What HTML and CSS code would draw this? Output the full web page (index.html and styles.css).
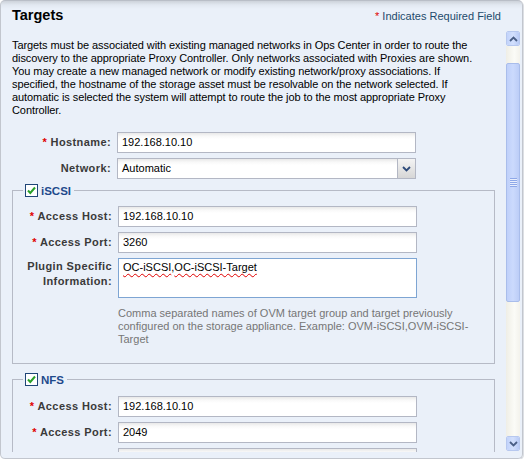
FILE: index.html
```html
<!DOCTYPE html>
<html>
<head>
<meta charset="utf-8">
<title>Targets</title>
<link rel="stylesheet" href="styles.css">
</head>
<body>
<div class="panel">
  <div class="header">
    <h1 class="title">Targets</h1>
    <span class="req-note"><span class="star">*</span> Indicates Required Field</span>
  </div>
  <div class="body">
    <div class="content">
      <p class="intro">Targets must be associated with existing managed networks in Ops Center in order to route the<br>discovery to the appropriate Proxy Controller. Only networks associated with Proxies are shown.<br>You may create a new managed network or modify existing network/proxy associations. If<br>specified, the hostname of the storage asset must be resolvable on the network selected. If<br>automatic is selected the system will attempt to route the job to the most appropriate Proxy<br>Controller.</p>

      <div class="form-grid top-grid">
        <label class="lbl"><span class="star">*</span> Hostname:</label>
        <div class="input">192.168.10.10</div>
        <label class="lbl">Network:</label>
        <div class="input select"><span class="select-text">Automatic</span><span class="select-btn"><svg width="9" height="6" viewBox="0 0 9 6"><path d="M1 1 L4.5 4.5 L8 1" fill="none" stroke="#2d4a7a" stroke-width="1.8"/></svg></span></div>
      </div>

      <fieldset class="group">
        <legend class="legend"><span class="check"><svg width="13" height="13" viewBox="0 0 13 13"><rect x="0.5" y="0.5" width="12" height="12" fill="#fff" stroke="#1f4577"/><path d="M3 6.5 L5.3 9 L10 3.5" fill="none" stroke="#2aa02a" stroke-width="2"/></svg></span><span class="legend-text">iSCSI</span></legend>
        <div class="form-grid">
          <label class="lbl"><span class="star">*</span> Access Host:</label>
          <div class="input">192.168.10.10</div>
          <label class="lbl"><span class="star">*</span> Access Port:</label>
          <div class="input">3260</div>
          <label class="lbl lbl-top">Plugin Specific<br>Information:</label>
          <div class="input textarea"><span class="misspelled">OC-iSCSI</span>,<span class="misspelled">OC-iSCSI-Target</span></div>
          <p class="help">Comma separated names of OVM target group and target previously<br>configured on the storage appliance. Example: OVM-iSCSI,OVM-iSCSI-<br>Target</p>
        </div>
      </fieldset>

      <fieldset class="group">
        <legend class="legend"><span class="check"><svg width="13" height="13" viewBox="0 0 13 13"><rect x="0.5" y="0.5" width="12" height="12" fill="#fff" stroke="#1f4577"/><path d="M3 6.5 L5.3 9 L10 3.5" fill="none" stroke="#2aa02a" stroke-width="2"/></svg></span><span class="legend-text">NFS</span></legend>
        <div class="form-grid nfs-grid">
          <label class="lbl"><span class="star">*</span> Access Host:</label>
          <div class="input">192.168.10.10</div>
          <label class="lbl"><span class="star">*</span> Access Port:</label>
          <div class="input">2049</div>
          <span class="lbl"></span>
          <div class="input"></div>
        </div>
      </fieldset>
    </div>

    <div class="scrollbar">
      <div class="sb-btn"><svg width="9" height="6" viewBox="0 0 9 6"><path d="M1 5 L4.5 1.5 L8 5" fill="none" stroke="#4a5f86" stroke-width="1.8"/></svg></div>
      <div class="sb-track">
        <div class="sb-thumb"><span class="grip"></span></div>
      </div>
      <div class="sb-btn"><svg width="9" height="6" viewBox="0 0 9 6"><path d="M1 1 L4.5 4.5 L8 1" fill="none" stroke="#4a5f86" stroke-width="1.8"/></svg></div>
    </div>
  </div>
</div>
</body>
</html>
```

FILE: styles.css
```css
html, body {
  margin: 0;
  padding: 0;
  background: #ffffff;
}

body {
  font-family: "Liberation Sans", Arial, sans-serif;
  font-size: 11px;
  color: #000;
}

.panel {
  width: 521px;
  height: 457px;
  border: 1px solid #c2c6ce;
  border-top-color: #b9bec7;
  border-radius: 5px;
  background: linear-gradient(#cdd2da 0, #e2e8f1 4px, #eaf0f9 8px);
  display: flex;
  flex-direction: column;
  overflow: hidden;
  box-shadow: 1px 1px 0 #dcdfe4;
}

.header {
  height: 30px;
  box-sizing: border-box;
  display: flex;
  justify-content: space-between;
  align-items: baseline;
  padding: 6px 21px 0 11px;
}

.title {
  margin: 0;
  font-size: 14.5px;
  font-weight: bold;
  color: #000;
}

.req-note {
  color: #1e4a6b;
  font-size: 11px;
}

.star {
  color: #e00000;
}

.body {
  flex: 1;
  display: flex;
  min-height: 0;
}

.content {
  flex: 1;
  padding: 8px 0 0 11px;
  margin-bottom: 6px;
  overflow: hidden;
}

.intro {
  margin: 0;
  line-height: 13px;
  letter-spacing: -0.08px;
  color: #000;
}

.form-grid {
  display: grid;
  grid-template-columns: 89px 299px;
  column-gap: 6px;
  row-gap: 5px;
  align-items: center;
}

.top-grid {
  grid-template-columns: 99px 299px;
  margin-top: 15px;
}

.nfs-grid {
  margin-top: 1px;
}

.lbl {
  text-align: right;
  font-weight: bold;
  color: #3a3a3a;
  letter-spacing: 0.4px;
  line-height: 15px;
  white-space: nowrap;
}

.lbl-top {
  align-self: start;
  padding-top: 1px;
}

.input {
  height: 21px;
  box-sizing: border-box;
  border: 1px solid #b3b7c4;
  background: linear-gradient(#e8e8e8 0, #f8f8f8 3px, #ffffff 6px);
  padding: 0 4px;
  line-height: 19px;
  color: #000;
  white-space: nowrap;
  overflow: hidden;
}

.select {
  display: flex;
  padding-right: 0;
}

.select-text {
  flex: 1;
}

.select-btn {
  width: 17px;
  border-left: 1px solid #b3b7c4;
  background: linear-gradient(#f4f4f4, #d6d6d6);
  display: flex;
  align-items: center;
  justify-content: center;
}

.textarea {
  height: 40px;
  border-color: #7ea5d3;
  background: #fff;
  line-height: 16px;
}

.misspelled {
  text-decoration: underline wavy #e00000;
  text-decoration-thickness: 1px;
  text-underline-offset: 2px;
}

.help {
  grid-column: 2;
  margin: 4px 0 0;
  line-height: 13px;
  color: #767676;
  white-space: nowrap;
}

.group {
  margin: 5px 0 0;
  box-sizing: border-box;
  width: 483px;
  border: 1px solid #b6bac6;
  padding: 9px 0 17px 10px;
  min-width: 0;
}

.group + .group {
  margin-top: 9px;
}

.legend {
  padding: 0 3px 0 2px;
  display: flex;
  align-items: center;
  gap: 3px;
  height: 13px;
}

.check {
  display: block;
  width: 13px;
  height: 13px;
}

.check svg {
  display: block;
}

.legend-text {
  font-weight: bold;
  color: #1f4a8c;
  font-size: 11.5px;
}

.scrollbar {
  width: 14px;
  margin: 0 2px 7px 0;
  display: flex;
  flex-direction: column;
}

.sb-btn {
  height: 15px;
  box-sizing: border-box;
  border: 1px solid #ffffff;
  outline: 1px solid #b7c8ef;
  outline-offset: -1px;
  border-radius: 2px;
  background: linear-gradient(90deg, #c2d3fb, #d3e0fd 50%, #b9cbf6);
  display: flex;
  align-items: center;
  justify-content: center;
}

.sb-track {
  flex: 1;
  background: linear-gradient(90deg, #efeee6, #fbfbf7 60%, #f3f2ec);
  padding-top: 17px;
}

.sb-thumb {
  height: 239px;
  box-sizing: border-box;
  border: 1px solid #a9bdeb;
  border-radius: 2px;
  background: linear-gradient(90deg, #bfd0fa, #cbdafd 50%, #bccdf7);
  display: flex;
  align-items: center;
  justify-content: center;
}

.grip {
  width: 7px;
  height: 9px;
  background: repeating-linear-gradient(#8ea8e8 0, #8ea8e8 1px, #e8eefd 1px, #e8eefd 2px);
}
```
